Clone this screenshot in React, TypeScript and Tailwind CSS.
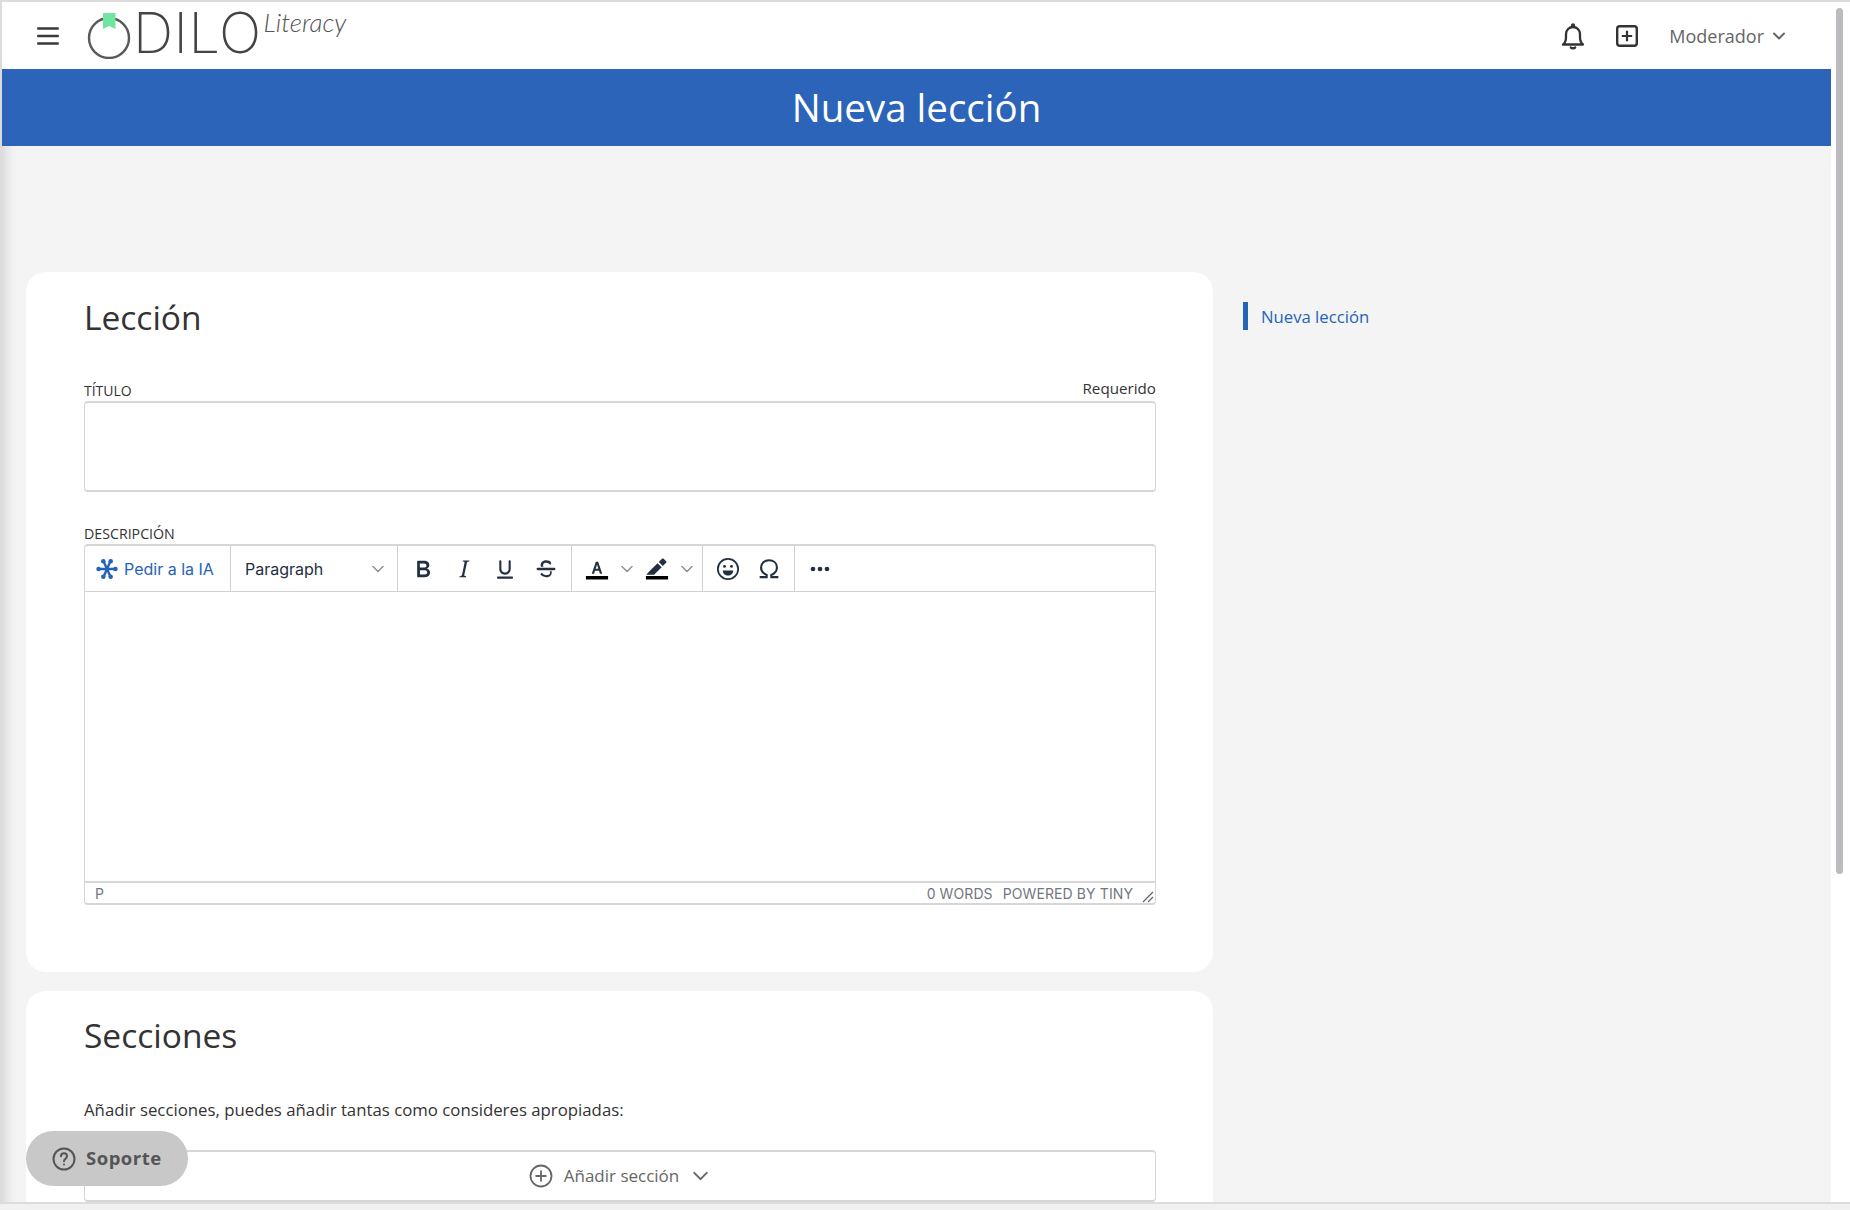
import React from "react";

const Chevron = ({ className = "", sw = 1.5 }: { className?: string; sw?: number }) => (
  <svg viewBox="0 0 12 8" className={className} fill="none" stroke="currentColor" strokeWidth={sw} strokeLinecap="round" strokeLinejoin="round">
    <path d="M1 1.500 6 6.500 11 1.500" />
  </svg>
);

const Tiny = ({ children }: { children: React.ReactNode }) => (
  <svg viewBox="0 0 24 24" className="h-[28px] w-[28px]" fill="#222f3e">
    {children}
  </svg>
);

const Btn = ({ children, w = "w-[41px]" }: { children: React.ReactNode; w?: string }) => (
  <div className={`flex h-full items-center justify-center ${w}`}>{children}</div>
);

function Logo() {
  return (
    <div className="relative ml-[27px] flex h-[67px] items-start">
      <svg viewBox="0 0 46 46" className="mt-[11px] h-[46px] w-[46px] shrink-0">
        <circle cx="23" cy="25" r="20" fill="none" stroke="#595959" strokeWidth="2.400" />
        <path d="M17 0h12.500v16l-6.250-3L17 16z" fill="#6fe59f" />
      </svg>
      <span className="mt-[0px] ml-[1px] font-['Inter',sans-serif] text-[56px] leading-[62px] font-[200] tracking-[0.500px] text-[#444]">DILO</span>
      <span className="mt-[4px] ml-[2px] font-['Lato',sans-serif] text-[26px] leading-[32px] font-light text-[#555] italic">Literacy</span>
    </div>
  );
}

function Toolbar() {
  return (
    <div className="flex h-[46px] shrink-0 items-stretch rounded-t border-b border-[#d0d0d0] font-['Inter',sans-serif]">
      <div className="flex w-[146px] items-center border-r border-[#d0d0d0] pl-[11px] text-[16px] text-[#2563b8]">
        <svg viewBox="0 0 24 24" className="h-[22px] w-[22px]" fill="#2563b8" stroke="#2563b8">
          <path strokeWidth="2.600" d="M12 12 8.500 4M12 12 15.500 4M12 12 8.500 20M12 12 15.500 20M12 12 3 12M12 12 21 12" />
          <circle cx="8" cy="3.500" r="2.500" stroke="none" />
          <circle cx="16" cy="3.500" r="2.500" stroke="none" />
          <circle cx="8" cy="20.500" r="2.500" stroke="none" />
          <circle cx="16" cy="20.500" r="2.500" stroke="none" />
          <circle cx="2.800" cy="12" r="2.500" stroke="none" />
          <circle cx="21.200" cy="12" r="2.500" stroke="none" />
        </svg>
        <span className="ml-[6px]">Pedir a la IA</span>
      </div>
      <div className="flex w-[167px] items-center border-r border-[#d0d0d0] pl-[14px] text-[16px] text-[#222f3e]">
        <span>Paragraph</span>
        <Chevron className="mr-[13px] ml-[auto] h-[8px] w-[12px] text-[#8b929b]" />
      </div>
      <div className="flex w-[174px] items-center border-r border-[#d0d0d0] pl-[4px]">
        <Btn>
          <Tiny>
            <path d="M7.800 19c-.3 0-.5 0-.6-.2l-.2-.5V5.700c0-.2 0-.4.2-.5l.6-.2h5c1.500 0 2.700.3 3.500 1 .7.6 1.100 1.400 1.100 2.500a3 3 0 0 1-.6 1.900c-.4.6-1 1-1.600 1.200.4.1.9.3 1.300.6s.8.7 1 1.200c.4.400.5 1 .5 1.600 0 1.300-.4 2.300-1.300 3-.8.7-2.100 1-3.800 1H7.800Zm5-8.300c.6 0 1.200-.1 1.600-.5.4-.3.6-.7.6-1.300 0-1.100-.8-1.700-2.300-1.700H9.300v3.500h3.400Zm.5 6c.7 0 1.300-.1 1.700-.4.4-.4.6-.9.6-1.500s-.2-1-.7-1.400c-.4-.3-1-.4-2-.4H9.400v3.800h4Z" />
          </Tiny>
        </Btn>
        <Btn>
          <Tiny>
            <path d="m16.700 4.700-.1.900h-.3c-.6 0-1 0-1.400.3-.3.300-.4.600-.5 1.100l-2.100 9.800v.6c0 .5.400.8 1.400.8h.2l-.2.800H8l.2-.8h.2c1.100 0 1.800-.5 2-1.500l2-9.800.1-.5c0-.6-.4-.8-1.400-.8h-.3l.2-.9h5.800Z" />
          </Tiny>
        </Btn>
        <Btn>
          <Tiny>
            <path d="M16 4.500c.5 0 .9.400.9.900v6.600c0 2.700-2.200 4.900-4.900 4.900S7.100 14.700 7.100 12V5.400c0-.5.400-.9.900-.9s.9.400.9.900V12c0 1.700 1.400 3.100 3.100 3.100s3.100-1.400 3.100-3.100V5.400c0-.5.400-.9.900-.9ZM6 18.500h12c.5 0 .9.400.9.900s-.4.900-.9.900H6a.9.900 0 0 1 0-1.800Z" />
          </Tiny>
        </Btn>
        <Btn>
          <Tiny>
            <path d="M15.600 8.500c-.5-.7-1-1.100-1.300-1.300-.6-.4-1.300-.6-2-.6-2.700 0-2.800 1.700-2.800 2.100 0 .5.100.9.400 1.300H7.700c-.2-.4-.3-.8-.3-1.300 0-1.300.5-2.400 1.500-3.100 1-.7 2.400-1 3.300-1 1.900 0 3.300.6 4.300 2l-.9 1.900ZM16.600 13c.3.700.3 1.300.3 1.900 0 1.400-.7 4.100-5 4.100A6.200 6.200 0 0 1 7 16.400l1.500-1.100c.4.600 1.600 2 3.700 2 1.600 0 2.500-.4 3-1 .3-.4.3-.8.300-1.100 0-.4 0-.8-.4-1.200h1.500ZM4.900 11h14.200a1 1 0 0 1 0 2H4.900a1 1 0 0 1 0-2Z" />
          </Tiny>
        </Btn>
      </div>
      <div className="flex w-[131px] items-center border-r border-[#d0d0d0] pl-[1px]">
        <Btn w="w-[48px]">
          <Tiny>
            <rect x="2.500" y="18" width="19" height="3" fill="#000" />
            <path d="M7.500 16 11 5.800h2L16.500 16h-2l-.8-2.400h-3.400L9.500 16h-2Zm3.400-4.200h2.200L12 8.200l-1.100 3.600Z" />
          </Tiny>
        </Btn>
        <Btn w="w-[12px]"><Chevron className="h-[8px] w-[12px] text-[#8b929b]" /></Btn>
        <Btn w="w-[48px]">
          <Tiny>
            <rect x="2.500" y="18" width="19" height="3" fill="#000" />
            <path d="M16.300 3.200c.4-.4 1-.4 1.400 0l2.100 2.100c.4.400.4 1 0 1.400L17 9.500 13.500 6l2.800-2.800ZM12.500 7 16 10.500 9.500 17H3l.2-.5 2.500-2.800L12.500 7Z" />
          </Tiny>
        </Btn>
        <Btn w="w-[12px]"><Chevron className="h-[8px] w-[12px] text-[#8b929b]" /></Btn>
      </div>
      <div className="flex w-[92px] items-center border-r border-[#d0d0d0] pl-[4px]">
        <Btn>
          <svg viewBox="0 0 24 24" className="h-[28px] w-[28px]" fill="none">
            <circle cx="12" cy="12" r="8.700" stroke="#222f3e" strokeWidth="1.500" />
            <circle cx="9" cy="9.800" r="1.200" fill="#222f3e" />
            <circle cx="15" cy="9.800" r="1.200" fill="#222f3e" />
            <path d="M7.500 13.200h9c0 2.600-2 4.300-4.500 4.300s-4.500-1.700-4.500-4.300Z" fill="#222f3e" />
          </svg>
        </Btn>
        <Btn>
          <svg viewBox="0 0 24 24" className="h-[28px] w-[28px]" fill="none" stroke="#222f3e" strokeWidth="1.800">
            <path d="M4 19h6v-1.800C7.200 16 5.200 13.500 5.200 10.800 5.200 6.900 8.100 4.500 12 4.500s6.800 2.400 6.800 6.300c0 2.700-2 5.200-4.800 6.400V19h6" />
          </svg>
        </Btn>
      </div>
      <div className="flex items-center pl-[4px]">
        <Btn>
          <svg viewBox="0 0 24 24" className="h-[28px] w-[28px]" fill="#222f3e">
            <circle cx="6" cy="12" r="2" />
            <circle cx="12" cy="12" r="2" />
            <circle cx="18" cy="12" r="2" />
          </svg>
        </Btn>
      </div>
    </div>
  );
}

function Editor() {
  return (
    <div className="flex h-[361px] flex-col rounded border-x border-t-2 border-b-2 border-[#d6d6d6] bg-white">
      <Toolbar />
      <div className="flex-1" />
      <div className="relative flex h-[22px] shrink-0 items-center justify-between border-t-2 border-[#d6d6d6] pr-[22px] pl-[10px] font-['Inter',sans-serif] text-[14px] text-[#6f7782]">
        <span>P</span>
        <span className="tracking-[.1px]">0 WORDS<span className="ml-[10px]">POWERED BY TINY</span></span>
        <svg viewBox="0 0 12 12" className="absolute right-[1px] bottom-[0px] h-3 w-3" stroke="#5f6773" strokeWidth="1.300" fill="none">
          <path d="M1 11 11 1M6 11l5-5" />
        </svg>
      </div>
    </div>
  );
}

export default function App() {
  return (
    <div className="relative h-[1210px] w-[1850px] overflow-hidden bg-[#f1f1f1] font-['Open_Sans',sans-serif]">
      <div className="flex h-[1204px] border-t-2 border-b-2 border-l-2 border-[#dcdcdc] bg-white">
        <div className="flex w-[1829px] flex-col">
          <header className="flex h-[67px] shrink-0 items-center bg-white">
            <svg viewBox="0 0 22 18" className="ml-[35px] h-[18px] w-[22px] shrink-0" stroke="#3a3a3a" strokeWidth="2.400" strokeLinecap="round">
              <path d="M1.200 1.500h19.600M1.200 9h19.600M1.200 16.500h19.600" />
            </svg>
            <Logo />
            <div className="ml-auto flex items-center">
              <svg viewBox="0 0 24 28" className="h-[28px] w-[24px]" fill="none" stroke="#333" strokeWidth="2.300" strokeLinejoin="round" strokeLinecap="round">
                <path d="M2 22.500h20c-1.500-1-3-3.500-3-7.500v-3c0-4-3.200-7-7-7s-7 3-7 7v3c0 4-1.500 6.500-3 7.500Z" />
                <circle cx="12" cy="3.500" r="1" fill="#333" />
                <path d="M9.800 25.500c.8 1 3.600 1 4.400 0" />
              </svg>
              <svg viewBox="0 0 22 22" className="ml-[31px] h-[22px] w-[22px]" fill="none" stroke="#333" strokeWidth="2.400">
                <rect x="1.200" y="1.200" width="19.600" height="19.600" rx="2.500" />
                <path d="M11 5.800v10.400M5.800 11h10.400" strokeWidth="2.200" />
              </svg>
              <span className="relative top-[1px] ml-[31px] text-[18px] text-[#666]">Moderador</span>
              <Chevron sw={2} className="mr-[46px] ml-[9px] h-[8px] w-[12px] text-[#666]" />
            </div>
          </header>
          <div className="flex h-[77px] shrink-0 items-center justify-center bg-[#2b64b9] text-[38.500px] text-white">Nueva lección</div>
          <div className="flex flex-1 bg-[#f4f4f4] pt-[126px] pl-[24px] shadow-[inset_14px_0_12px_-10px_rgba(0,0,0,0.12)]">
            <div className="flex w-[1187px] shrink-0 flex-col gap-[19px]">
              <section className="h-[700px] shrink-0 rounded-[20px] bg-white pt-[20px] pr-[57px] pl-[58px]">
                <h2 className="text-[33.500px] leading-[50px] text-[#333]">Lección</h2>
                <div className="mt-[36px] flex items-end justify-between text-[#333]">
                  <span className="text-[14px] leading-[20px]">TÍTULO</span>
                  <span className="pb-[3px] text-[15.200px] leading-[20px]">Requerido</span>
                </div>
                <div className="h-[91px] rounded border-x border-y-2 border-[#d6d6d6] bg-white" />
                <div className="mt-[32px] text-[14.200px] leading-[20px] text-[#333]">DESCRIPCIÓN</div>
                <Editor />
              </section>
              <section className="flex-1 rounded-t-[20px] bg-white pt-[20px] pr-[57px] pl-[58px]">
                <h2 className="text-[33.500px] leading-[48px] text-[#333]">Secciones</h2>
                <p className="mt-[39px] text-[16.800px] leading-[24px] text-[#333]">Añadir secciones, puedes añadir tantas como consideres apropiadas:</p>
                <div className="mt-[28px] flex h-[52px] items-center justify-center rounded border-x border-y-2 border-[#d6d6d6] text-[#666]">
                  <svg viewBox="0 0 24 24" className="relative left-[-2px] h-6 w-6" fill="none" stroke="#666" strokeWidth="1.800">
                    <circle cx="12" cy="12" r="10.500" />
                    <path d="M12 6.500v11M6.500 12h11" />
                  </svg>
                  <span className="ml-[9px] text-[17px]">Añadir sección</span>
                  <Chevron sw={1.600} className="ml-[13px] h-[10px] w-[17px]" />
                </div>
              </section>
            </div>
            <nav className="mt-[30px] ml-[30px] flex h-[28px] items-center border-l-[5px] border-[#2563b8] pl-[13px] text-[16.700px] text-[#2563b8]">
              <span className="relative top-[1px]">Nueva lección</span>
            </nav>
          </div>
        </div>
        <div className="flex-1 bg-white pt-[6px]">
          <div className="mx-auto h-[866px] w-[7px] translate-x-[-1px] rounded-full bg-[#bcbcc0]" />
        </div>
      </div>
      <button className="absolute top-[1131px] left-[26px] flex h-[55px] w-[162px] items-center rounded-full bg-[#c8c8c8] pl-[26px] text-[18.500px] font-bold tracking-[.5px] text-[#555]">
        <svg viewBox="0 0 24 24" className="h-[24px] w-[24px]" fill="none" stroke="#555" strokeWidth="2">
          <circle cx="12" cy="12" r="10.500" />
          <path d="M9 9.300c0-4 6-4 6 0 0 2.500-3 2.500-3 5" strokeLinecap="round" />
          <circle cx="12" cy="17.500" r="1" fill="#555" stroke="none" />
        </svg>
        <span className="relative -top-[1px] ml-[10px]">Soporte</span>
      </button>
    </div>
  );
}
